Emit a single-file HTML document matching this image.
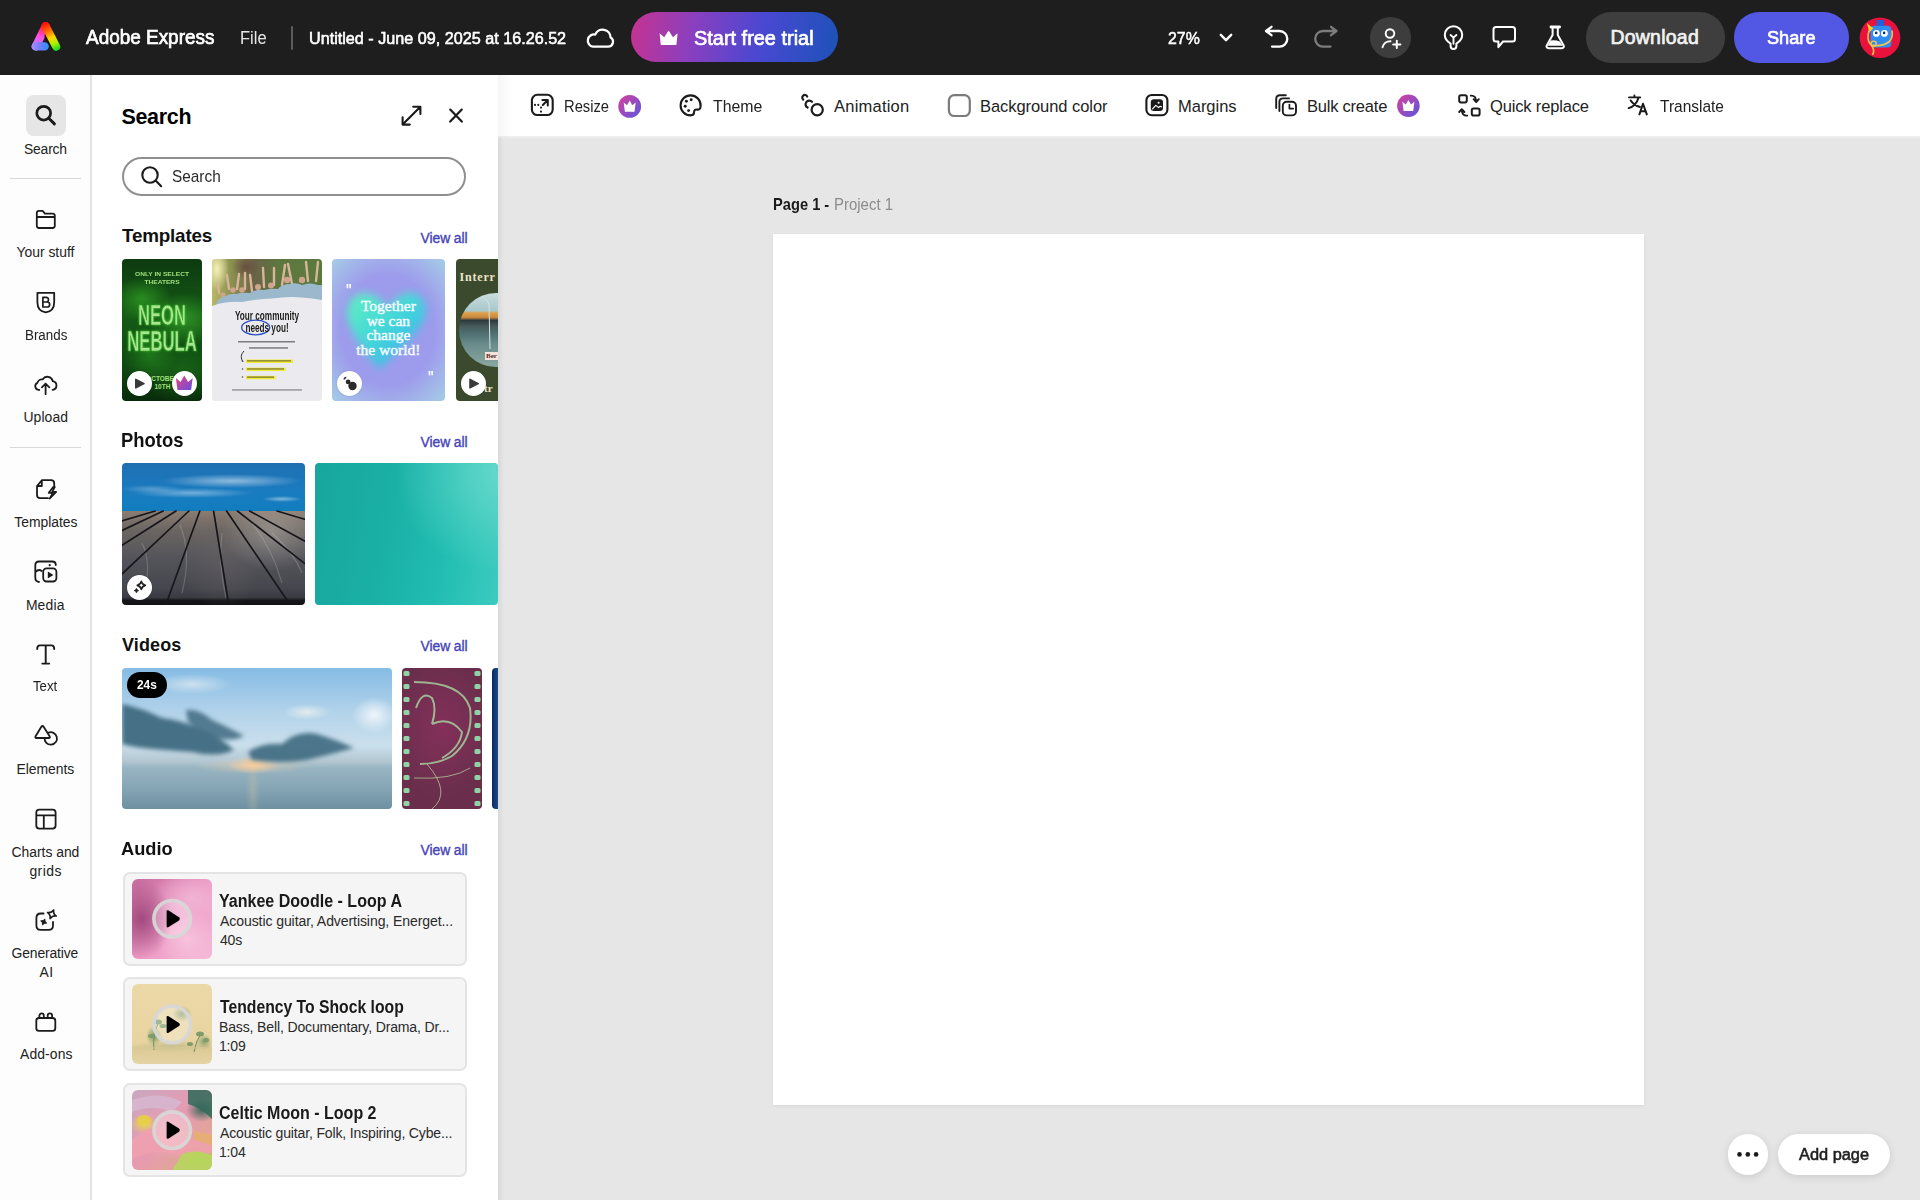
<!DOCTYPE html>
<html><head><meta charset="utf-8"><style>
*{box-sizing:border-box;margin:0;padding:0}
html,body{width:1920px;height:1200px;overflow:hidden;background:#e6e6e6;font-family:"Liberation Sans",sans-serif}
.t{position:absolute;line-height:1;white-space:pre;font-family:"Liberation Sans",sans-serif}
.a{position:absolute}
svg{position:absolute;overflow:visible}
</style></head>
<body>

<div class="a" style="left:0;top:0;width:1920px;height:75px;background:#1e1e1e"></div>
<div class="a" style="left:290.5px;top:25.5px;width:2.5px;height:24px;background:#5c5c5c;border-radius:1px"></div>
<div class="a" style="left:631px;top:12.3px;width:207.3px;height:50px;border-radius:25px;background:linear-gradient(100deg,#c7338f 0%,#8a3fbf 30%,#4a48d2 62%,#1c52b8 100%)"></div>
<div class="a" style="left:1370px;top:17px;width:40.5px;height:40.5px;border-radius:50%;background:#3d3d3d"></div>
<div class="a" style="left:1585.5px;top:12px;width:139px;height:50.5px;border-radius:25px;background:#3e3e3e"></div>
<div class="a" style="left:1734.3px;top:12px;width:114.7px;height:50.5px;border-radius:25px;background:#5258e4"></div>

<!-- left rail -->
<div class="a" style="left:0;top:75px;width:90px;height:1125px;background:#fdfdfd"></div><div class="a" style="left:90px;top:75px;width:2px;height:1125px;background:#e3e3e3"></div>
<div class="a" style="left:26px;top:95px;width:40px;height:41px;border-radius:8px;background:#e6e6e6"></div>
<div class="a" style="left:10px;top:178px;width:71px;height:1px;background:#d8d8d8"></div>
<div class="a" style="left:10px;top:446.5px;width:71px;height:1px;background:#d8d8d8"></div>

<!-- panel -->
<div class="a" style="left:92px;top:75px;width:406px;height:1125px;background:#fff"></div>
<div class="a" style="left:498px;top:138px;width:6px;height:1062px;background:linear-gradient(90deg,rgba(0,0,0,.06),rgba(0,0,0,0))"></div>
<div class="a" style="left:122.4px;top:156.5px;width:343.6px;height:39.5px;border-radius:20px;border:2px solid #8f8f8f;background:#fff"></div>

<!-- toolbar -->
<div class="a" style="left:498px;top:75px;width:1422px;height:63px;background:linear-gradient(180deg,#fff 0,#fff 60.5px,#f1f1f1 61px,#ececec 63px)"></div><div class="a" style="left:498px;top:75px;width:14px;height:63px;background:linear-gradient(90deg,rgba(0,0,0,.035),rgba(0,0,0,0))"></div>

<!-- canvas page -->
<div class="a" style="left:773px;top:234px;width:871px;height:871px;background:#fff;box-shadow:0 1px 3px rgba(0,0,0,.07)"></div>

<!-- add page -->
<div class="a" style="left:1727.5px;top:1134px;width:40.5px;height:40.5px;border-radius:50%;background:#fff;box-shadow:0 2px 8px rgba(0,0,0,.12)"></div>
<div class="a" style="left:1778px;top:1134px;width:111.5px;height:41px;border-radius:21px;background:#fff;box-shadow:0 2px 8px rgba(0,0,0,.12)"></div>

<div class="a" style="left:122.4px;top:259px;width:79.4px;height:141.6px;border-radius:4px;overflow:hidden;"><div class="a" style="inset:0;background:radial-gradient(ellipse 30px 22px at 20px 40px,rgba(60,190,40,.55),transparent),radial-gradient(ellipse 34px 26px at 62px 60px,rgba(70,200,50,.5),transparent),radial-gradient(ellipse 26px 30px at 28px 95px,rgba(50,170,40,.45),transparent),radial-gradient(ellipse 40px 30px at 60px 115px,rgba(40,140,30,.4),transparent),linear-gradient(180deg,#0d3a10 0%,#155a16 40%,#0f4a12 75%,#082a0a 100%)"></div><div class="t" style="left:-60px;width:200px;top:12px;text-align:center;font-size:6px;font-weight:700;color:#9fe07a;line-height:7.5px;transform:scaleX(1.1)">ONLY IN SELECT<br>THEATERS</div><div class="t" style="left:-60.5px;width:200px;top:43px;text-align:center;font-size:30px;font-weight:700;color:#a6e68e;-webkit-text-stroke:.5px #2f8a22;line-height:26px;transform:scaleX(.555);transform-origin:100px 0;text-shadow:0 0 3px #3ae02a">NEON<br>NEBULA</div><div class="t" style="left:-60px;width:200px;top:116px;text-align:center;font-size:6.5px;font-weight:700;color:#9fe07a;line-height:8px">OCTOBER<br>10TH</div></div>
<div class="a" style="left:212.4px;top:259px;width:109.6px;height:141.6px;border-radius:4px;overflow:hidden;box-shadow:inset 0 0 0 1px rgba(0,0,0,.07)"><div class="a" style="inset:0;background:#ebebef"></div><div class="a" style="left:0;top:0;width:110px;height:50px;background:radial-gradient(ellipse 12px 22px at 5px 10px,#f4f0b8,transparent),radial-gradient(ellipse 14px 12px at 34px 8px,#6a5040,transparent),radial-gradient(ellipse 30px 20px at 85px 10px,#5e7a40,transparent),linear-gradient(90deg,#b8b868 0%,#8a9050 18%,#6a6448 38%,#5e7440 60%,#587a3c 100%)"></div><svg width="110" height="142" style="left:0;top:0"><g stroke="#d8b498" stroke-width="2.4" stroke-linecap="round" fill="none"><path d="M7,34 L6,24"/><path d="M17,30 L15,16"/><path d="M25,30 L27,15"/><path d="M33,30 L33,14"/><path d="M40,32 L38,16"/><path d="M52,28 L51,9"/><path d="M62,26 L62,9"/><path d="M70,26 L73,6"/><path d="M80,25 L76,5"/><path d="M96,22 L94,3"/><path d="M104,22 L106,3"/></g><g fill="#cfa48a"><circle cx="11" cy="36" r="2.6"/><circle cx="21" cy="31" r="2.8"/><circle cx="30" cy="31" r="2.8"/><circle cx="46" cy="28" r="3"/><circle cx="59" cy="26.5" r="3"/><circle cx="75" cy="21" r="3.2"/><circle cx="90" cy="21" r="3.2"/></g><path d="M4,46 Q6,38 12,38 Q18,34 24,35 Q30,33 38,34 Q44,30 52,31 Q60,29 66,30 Q70,25 78,25 Q84,23 90,26 Q98,23 106,26 L110,26 V50 H0 Z" fill="#9cb8cc"/><path d="M0,47 Q14,42 30,43 Q46,40 60,39.5 Q76,37 90,38.5 Q100,39 110,41 V60 H0 Z" fill="#ebebef"/><ellipse cx="43.7" cy="68.5" rx="14" ry="7.3" fill="none" stroke="#2d4fc4" stroke-width="1.3"/><g fill="#f2ea3a"><rect x="34" y="100.5" width="47" height="3.5"/><rect x="34" y="108.6" width="39.5" height="3.5"/><rect x="34" y="116.8" width="29.5" height="3.5"/></g><path d="M32,92 Q27,97 31,103" fill="none" stroke="#222" stroke-width=".9"/><g fill="#333" opacity=".6"><rect x="26" y="82" width="57" height="1.5"/><rect x="37" y="88.2" width="39" height="1.5"/><rect x="35" y="101.2" width="44" height="1.3"/><rect x="35" y="109.3" width="37" height="1.3"/><rect x="35" y="117.5" width="27" height="1.3"/><rect x="20" y="130.4" width="70" height="1.1"/></g><g fill="#555"><circle cx="30.5" cy="102" r=".8"/><circle cx="30.5" cy="110" r=".8"/><circle cx="30.5" cy="118" r=".8"/></g></svg><div class="t" style="left:-45px;width:200px;top:51px;text-align:center;font-size:13px;font-weight:700;color:#1d1d1d;line-height:11.5px;transform:scaleX(.63);transform-origin:100px 0">Your community<br>needs you!</div></div>
<div class="a" style="left:332.4px;top:259px;width:113.1px;height:141.6px;border-radius:4px;overflow:hidden;"><div class="a" style="inset:0;background:radial-gradient(ellipse 85px 100px at 56px 71px,#9d9bec 55%,#a6d0e6 100%)"></div><svg width="113" height="142" style="left:0;top:0"><defs><filter id="hb" x="-30%" y="-30%" width="160%" height="160%"><feGaussianBlur stdDeviation="4"/></filter><linearGradient id="hg" x1="0" y1="0" x2="1" y2="1"><stop offset="0" stop-color="#62f0c0"/><stop offset=".45" stop-color="#44d8d8"/><stop offset="1" stop-color="#3aa8f4"/></linearGradient></defs><path d="M56,52 C49,32 22,27 16,47 C11,65 28,86 47,110 C72,86 99,65 93,45 C87,27 63,32 56,52 Z" fill="url(#hg)" filter="url(#hb)"/></svg><div class="t" style="left:-44px;width:200px;top:40px;text-align:center;font-family:'Liberation Serif',serif;font-size:15.5px;font-weight:400;-webkit-text-stroke:.45px #f4fbff;color:#f4fbff;line-height:14.5px">Together<br>we can<br>change<br>the world!</div><div class="t" style="left:13px;top:24px;font-size:16px;font-weight:700;color:#fff;transform:scaleX(.8)">"</div><div class="t" style="left:95px;top:111px;font-size:16px;font-weight:700;color:#fff;transform:scaleX(.8)">"</div></div>
<div class="a" style="left:456.1px;top:259px;width:41.9px;height:141.6px;overflow:hidden;border-radius:4px 0 0 4px"><div class="a" style="inset:0;background:#3b4a2d"></div><div class="a" style="left:3px;top:34px;width:74px;height:74px;border-radius:50%;background:linear-gradient(180deg,#c8dede 0%,#a8c8cc 24%,#e0a048 27%,#c88840 33%,#2c3a3e 37%,#485a5c 45%,#4e7070 55%,#6a8c8c 70%,#8aa8a2 100%)"></div><svg width="42" height="142" style="left:0;top:0"><path d="M34,90 L33,46 Q32,40 26,38" stroke="#d8e2e2" stroke-width="1" fill="none"/></svg><div class="t" style="left:3.5px;top:12px;font-family:'Liberation Serif',serif;font-size:12px;font-weight:700;letter-spacing:.8px;color:#ece2c8">Interr</div><div class="a" style="left:29px;top:93px;width:14px;height:8px;background:#f2e4da"></div><div class="t" style="left:30px;top:94px;font-family:'Liberation Serif',serif;font-size:7px;font-weight:700;color:#5a2a2a">Ber</div><div class="t" style="left:28px;top:124px;font-family:'Liberation Serif',serif;font-size:11px;font-weight:700;color:#ece2c8">tr</div></div>
<div class="a" style="left:122.4px;top:463px;width:182.3px;height:141.8px;border-radius:4px;overflow:hidden;"><div class="a" style="left:0;top:0;width:183px;height:48.5px;background:radial-gradient(ellipse 70px 7px at 110px 18px,rgba(235,242,250,.55),transparent),radial-gradient(ellipse 60px 5px at 70px 30px,rgba(225,238,250,.45),transparent),radial-gradient(ellipse 30px 4px at 30px 26px,rgba(225,238,250,.3),transparent),radial-gradient(ellipse 20px 3px at 160px 36px,rgba(235,242,250,.5),transparent),linear-gradient(180deg,#1f6fb2 0%,#1a7cc0 60%,#0f7dbf 100%)"></div><div class="a" style="left:0;top:48px;width:183px;height:94px;background:radial-gradient(ellipse 50px 40px at 150px 20px,rgba(190,185,180,.45),transparent),radial-gradient(ellipse 40px 50px at 100px 50px,rgba(120,110,110,.3),transparent),linear-gradient(180deg,#8a7c72 0%,#6c6662 20%,#54545a 50%,#46474e 82%,#3a3b42 92%,#161618 95%,#121214 100%)"></div><svg width="183" height="142" style="left:0;top:0"><g stroke="rgba(220,220,225,.22)" stroke-width="1.2" fill="none"><path d="M58,62 Q70,90 60,130"/><path d="M100,70 Q96,100 104,135"/><path d="M130,60 Q150,85 160,120"/><path d="M150,70 Q172,90 180,110"/><path d="M20,80 Q30,100 22,130"/></g><g stroke="#17161a" stroke-width="1.7" fill="none" stroke-linecap="round"><path d="M33.2,48.0 L-0.4,58.0"/><path d="M41.2,48.0 L-0.4,67.7"/><path d="M54.0,48.0 L-0.4,82.5"/><path d="M66.9,48.0 L-0.4,111.3"/><path d="M77.8,48.0 L44.1,141.0"/><path d="M91.6,48.0 L106.6,141.0"/><path d="M104.6,48.0 L164.9,137.0"/><path d="M115.4,48.0 L182.6,100.4"/><path d="M155.0,48.0 L182.6,56.3"/><path d="M127.6,48.0 L182.6,78.0"/></g></svg></div>
<div class="a" style="left:315px;top:463px;width:183px;height:141.8px;border-radius:4px;overflow:hidden;"><div class="a" style="inset:0;background:radial-gradient(ellipse 110px 100px at 190px 10px,rgba(110,220,206,.85),transparent),linear-gradient(100deg,#18a69e 0%,#1ab0a6 40%,#22bdb2 70%,#3ccbbf 100%)"></div></div>
<div class="a" style="left:122px;top:667.6px;width:269.6px;height:141.2px;border-radius:4px;overflow:hidden;"><div class="a" style="inset:0;background:radial-gradient(ellipse 26px 9px at 131px 97px,rgba(255,205,150,.9),transparent),radial-gradient(ellipse 60px 8px at 131px 98px,rgba(240,210,170,.5),transparent),radial-gradient(ellipse 7px 40px at 131px 122px,rgba(210,195,160,.35),transparent),radial-gradient(ellipse 22px 18px at 252px 47px,rgba(245,248,252,.9),transparent),radial-gradient(ellipse 24px 8px at 185px 44px,rgba(245,245,240,.7),transparent),radial-gradient(ellipse 40px 10px at 70px 16px,rgba(240,242,245,.6),transparent),linear-gradient(180deg,#86bce4 0%,#b0d2ea 30%,#cadfec 55%,#b4c8d2 66%,#98b4c2 71%,#86a6b6 85%,#6e90a2 100%)"></div><svg width="270" height="142" style="left:0;top:0"><defs><filter id="cb" x="-20%" y="-50%" width="140%" height="200%"><feGaussianBlur stdDeviation="2.2"/></filter></defs><g filter="url(#cb)" fill="#3f6a80"><path d="M0,36 Q20,40 40,50 Q60,52 80,62 Q100,70 112,82 Q95,90 70,84 Q40,82 20,80 Q6,78 0,76 Z" opacity=".95"/><path d="M64,42 Q76,40 90,52 Q104,58 122,68 Q110,74 96,70 Q80,64 66,54 Z" opacity=".85"/><path d="M126,84 Q140,74 160,76 Q175,62 195,66 Q215,72 232,80 Q210,86 185,92 Q160,96 130,92 Z" opacity=".9"/></g></svg></div>
<div class="a" style="left:402.1px;top:667.6px;width:79.6px;height:141.2px;border-radius:4px;overflow:hidden;"><div class="a" style="inset:0;background:radial-gradient(ellipse 50px 70px at 40px 60px,#84305a,#6a2e4c)"></div><svg width="80" height="141" style="left:0;top:0"><g fill="#8fd3a6"><rect x="1.5" y="3" width="6" height="5" rx="1.5"/><rect x="72.5" y="3" width="6" height="5" rx="1.5"/><rect x="1.5" y="16" width="6" height="5" rx="1.5"/><rect x="72.5" y="16" width="6" height="5" rx="1.5"/><rect x="1.5" y="29" width="6" height="5" rx="1.5"/><rect x="72.5" y="29" width="6" height="5" rx="1.5"/><rect x="1.5" y="42" width="6" height="5" rx="1.5"/><rect x="72.5" y="42" width="6" height="5" rx="1.5"/><rect x="1.5" y="55" width="6" height="5" rx="1.5"/><rect x="72.5" y="55" width="6" height="5" rx="1.5"/><rect x="1.5" y="68" width="6" height="5" rx="1.5"/><rect x="72.5" y="68" width="6" height="5" rx="1.5"/><rect x="1.5" y="81" width="6" height="5" rx="1.5"/><rect x="72.5" y="81" width="6" height="5" rx="1.5"/><rect x="1.5" y="94" width="6" height="5" rx="1.5"/><rect x="72.5" y="94" width="6" height="5" rx="1.5"/><rect x="1.5" y="107" width="6" height="5" rx="1.5"/><rect x="72.5" y="107" width="6" height="5" rx="1.5"/><rect x="1.5" y="120" width="6" height="5" rx="1.5"/><rect x="72.5" y="120" width="6" height="5" rx="1.5"/><rect x="1.5" y="133" width="6" height="5" rx="1.5"/><rect x="72.5" y="133" width="6" height="5" rx="1.5"/></g><path d="M12,14 Q60,14 68,40 Q72,70 50,88 Q36,96 18,96 M30,56 Q35,40 30,30 Q20,22 14,40 M30,56 Q48,48 60,64 Q58,80 40,90" fill="none" stroke="#a8d8a0" stroke-width="2" opacity=".8"/><path d="M12,110 Q50,112 68,100 M25,96 Q50,125 30,141" fill="none" stroke="#b8dca0" stroke-width="1" opacity=".7"/></svg></div>
<div class="a" style="left:492px;top:667.6px;width:6px;height:141.2px;border-radius:4px 0 0 4px;background:linear-gradient(90deg,#0a2a60,#1a4a8a)"></div>
<div class="a" style="left:127px;top:672.3px;width:39.8px;height:25.5px;border-radius:13px;background:#000"></div>
<div class="a" style="left:122.8px;top:871.6px;width:343.9px;height:94.2px;border-radius:7px;background:#f5f5f5;border:2px solid #e4e4e4"></div>
<div class="a" style="left:131.7px;top:878.6px;width:80.7px;height:80.2px;border-radius:6px;overflow:hidden;"><div class="a" style="inset:0;background:radial-gradient(ellipse 30px 40px at 10px 40px,#a24a7e,transparent),radial-gradient(ellipse 40px 30px at 60px 20px,#f2b4d4,transparent),radial-gradient(ellipse 30px 30px at 55px 60px,#f7c2dc,transparent),linear-gradient(135deg,#c86ca0,#ef9fc8 60%,#f4b8d6)"></div></div>
<svg width="1" height="1" style="left:0;top:0"><circle cx="172.2" cy="918.8000000000001" r="18.3" fill="rgba(255,255,255,.28)" stroke="rgba(215,215,215,.95)" stroke-width="3.6"/><path d="M166.6,911.6 Q166.6,909.4000000000001 168.6,910.6 L179,917.2 Q180.8,918.8000000000001 179,920.4000000000001 L168.6,927.0000000000001 Q166.6,928.2 166.6,926.0000000000001 Z" fill="#000"/></svg>
<div class="a" style="left:122.8px;top:977.3000000000001px;width:343.9px;height:94.2px;border-radius:7px;background:#f5f5f5;border:2px solid #e4e4e4"></div>
<div class="a" style="left:131.7px;top:984.3000000000001px;width:80.7px;height:80.2px;border-radius:6px;overflow:hidden;"><div class="a" style="inset:0;background:radial-gradient(ellipse 40px 6px at 40px 62px,#c8c090,transparent),radial-gradient(ellipse 8px 10px at 22px 52px,#7c9a68,transparent),radial-gradient(ellipse 10px 8px at 50px 30px,#8fa878,transparent),radial-gradient(ellipse 8px 8px at 72px 58px,#8da06a,transparent),linear-gradient(180deg,#ecd9a8 0%,#e8d4a0 75%,#dccb96 80%,#e4d4a4 100%)"></div><svg width="81" height="81" style="left:0;top:0"><g stroke="#6f8f62" stroke-width="1" fill="none"><path d="M22,66 Q20,50 28,36"/><path d="M62,68 Q64,56 70,48"/></g><g fill="#7e9c6c"><ellipse cx="26" cy="38" rx="4" ry="2.5"/><ellipse cx="31" cy="42" rx="3.5" ry="2"/><ellipse cx="19" cy="52" rx="3" ry="2"/><ellipse cx="68" cy="50" rx="4" ry="2.5"/><ellipse cx="74" cy="56" rx="3" ry="2"/><ellipse cx="58" cy="60" rx="3" ry="2"/></g><path d="M0,64 H81" stroke="#d8c898" stroke-width="1.2"/></svg></div>
<svg width="1" height="1" style="left:0;top:0"><circle cx="172.2" cy="1024.5" r="18.3" fill="rgba(255,255,255,.28)" stroke="rgba(215,215,215,.95)" stroke-width="3.6"/><path d="M166.6,1017.3 Q166.6,1015.1 168.6,1016.3 L179,1022.9 Q180.8,1024.5 179,1026.1 L168.6,1032.7 Q166.6,1033.9 166.6,1031.7 Z" fill="#000"/></svg>
<div class="a" style="left:122.8px;top:1083.0px;width:343.9px;height:94.2px;border-radius:7px;background:#f5f5f5;border:2px solid #e4e4e4"></div>
<div class="a" style="left:131.7px;top:1090.0px;width:80.7px;height:80.2px;border-radius:6px;overflow:hidden;"><div class="a" style="inset:0;background:radial-gradient(ellipse 14px 10px at 12px 34px,#e8d848,transparent),radial-gradient(ellipse 16px 12px at 70px 20px,#3a6a5a,transparent),radial-gradient(ellipse 20px 16px at 66px 70px,#a8c838,transparent),radial-gradient(ellipse 30px 26px at 36px 44px,#f0a8b8,transparent),linear-gradient(135deg,#c8a8c0,#e89ab0 50%,#d8b080)"></div><svg width="81" height="81" style="left:0;top:0"><g opacity=".85"><path d="M0,50 Q20,30 40,44 Q60,56 81,40 V62 Q60,70 40,64 Q20,58 0,70 Z" fill="#f0a0b0"/><path d="M0,10 Q30,0 50,12 L40,22 Q20,14 0,22 Z" fill="#d8b8d0"/><path d="M56,0 H81 V30 Q70,18 56,14 Z" fill="#2f6a5a"/><path d="M50,64 Q64,58 81,66 V81 H40 Z" fill="#b8d860"/><ellipse cx="12" cy="30" rx="7" ry="5" fill="#e8d040"/><path d="M62,40 Q70,44 81,44 V56 Q72,52 62,50 Z" fill="#e8b070"/></g></svg></div>
<svg width="1" height="1" style="left:0;top:0"><circle cx="172.2" cy="1130.2" r="18.3" fill="rgba(255,255,255,.28)" stroke="rgba(215,215,215,.95)" stroke-width="3.6"/><path d="M166.6,1123.0 Q166.6,1120.8 168.6,1122.0 L179,1128.6000000000001 Q180.8,1130.2 179,1131.8 L168.6,1138.4 Q166.6,1139.6000000000001 166.6,1137.4 Z" fill="#000"/></svg>
<div class="a" style="left:126.9px;top:371.0px;width:25.0px;height:25.0px;border-radius:50%;background:#fff;box-shadow:0 0 2px rgba(0,0,0,.15)"></div>
<div class="a" style="left:171.8px;top:371.0px;width:25.0px;height:25.0px;border-radius:50%;background:#fff;box-shadow:0 0 2px rgba(0,0,0,.15)"></div>
<div class="a" style="left:337.4px;top:370.6px;width:25.0px;height:25.0px;border-radius:50%;background:#fff;box-shadow:0 0 2px rgba(0,0,0,.15)"></div>
<div class="a" style="left:461.1px;top:370.6px;width:25.0px;height:25.0px;border-radius:50%;background:#fff;box-shadow:0 0 2px rgba(0,0,0,.15)"></div>
<div class="a" style="left:127.0px;top:574.6px;width:25.0px;height:25.0px;border-radius:50%;background:#fff;box-shadow:0 0 2px rgba(0,0,0,.15)"></div>
<svg width="1" height="1" style="left:0;top:0"><path d="M135.8,379.40000000000003 L144.0,383.6 L135.8,387.8 Z" fill="#3a3a3a" stroke="#3a3a3a" stroke-width="1.6" stroke-linejoin="round"/><path d="M470.0,379.40000000000003 L478.20000000000005,383.6 L470.0,387.8 Z" fill="#3a3a3a" stroke="#3a3a3a" stroke-width="1.6" stroke-linejoin="round"/><defs><linearGradient id="gcrown" x1="0" y1="0" x2="1" y2="1"><stop offset="0" stop-color="#e8407a"/><stop offset="1" stop-color="#6a50e0"/></linearGradient></defs><path d="M175.9,378.1 L180.5,382.1 L184.3,375.5 L188.10000000000002,382.1 L192.70000000000002,378.1 L191.10000000000002,389.9 H177.5 Z" fill="url(#gcrown)"/><circle cx="352.5" cy="386.0" r="4.2" fill="#2a2a2a"/><circle cx="348.09999999999997" cy="381.90000000000003" r="2.4" fill="#2a2a2a"/><path d="M344.29999999999995,379.5 A1.8,1.8 0 0 1 346.29999999999995,377.5" stroke="#2a2a2a" stroke-width="1.6" fill="none"/><path d="M141.3,581.4 Q142.10000000000002,584.6 145.3,585.4 Q142.10000000000002,586.1999999999999 141.3,589.4 Q140.5,586.1999999999999 137.3,585.4 Q140.5,584.6 141.3,581.4 Z" fill="none" stroke="#222" stroke-width="1.7" stroke-linejoin="round"/><path d="M136.4,588.2 Q136.9,590.1 138.8,590.6 Q136.9,591.1 136.4,593.0 Q135.9,591.1 134.0,590.6 Q135.9,590.1 136.4,588.2 Z" fill="#222" stroke="#222" stroke-width=".6"/></svg>
<svg width="1920" height="1200" style="left:0;top:0"><defs>
    <linearGradient id="lgL" gradientUnits="userSpaceOnUse" x1="34" y1="49" x2="46" y2="23"><stop offset="0" stop-color="#a58cff"/><stop offset=".5" stop-color="#ff4ee0"/><stop offset=".85" stop-color="#ff1a3a"/><stop offset="1" stop-color="#ff1010"/></linearGradient>
    <linearGradient id="lgR" gradientUnits="userSpaceOnUse" x1="46" y1="23" x2="57.5" y2="49"><stop offset="0" stop-color="#ff1010"/><stop offset=".3" stop-color="#ff7000"/><stop offset=".55" stop-color="#ffd800"/><stop offset=".78" stop-color="#b0f000"/><stop offset="1" stop-color="#22dd22"/></linearGradient>
    <linearGradient id="lgB" gradientUnits="userSpaceOnUse" x1="32" y1="48" x2="48" y2="48"><stop offset="0" stop-color="#a88cff"/><stop offset=".45" stop-color="#7a7cff"/><stop offset="1" stop-color="#2a90ff"/></linearGradient>
    <linearGradient id="gbadge" x1="0" y1="0" x2="1" y2="1"><stop offset="0" stop-color="#d9409a"/><stop offset="1" stop-color="#5a55e0"/></linearGradient>
    </defs>
<path d="M35.8,46.4 L45.6,26.2" fill="none" stroke="url(#lgL)" stroke-width="8.2" stroke-linecap="round" stroke-linejoin="round" />
<path d="M35.8,46.4 L44.6,46.4" fill="none" stroke="url(#lgB)" stroke-width="8.4" stroke-linecap="round" stroke-linejoin="round" />
<path d="M49.6,36.2 L56.2,46.6" fill="none" stroke="#161616" stroke-width="10.2" stroke-linecap="round" stroke-linejoin="round" />
<path d="M45.6,26.2 L56.2,46.6" fill="none" stroke="url(#lgR)" stroke-width="8.2" stroke-linecap="round" stroke-linejoin="round" />
<path d="M592.8,46.7 H608 A4.9,4.9 0 0 0 610.6,37.6 A8,8 0 0 0 595.2,34.6 A5.9,5.9 0 0 0 592.8,46.7 Z" fill="none" stroke="#fff" stroke-width="2.3" stroke-linecap="round" stroke-linejoin="round" />
<path d="M659.6,33.2 L664.2,37.2 L668.6,30.4 L673.0,37.2 L677.6,33.2 L676.4,45.0 H660.8 Z" fill="#fff" />
<path d="M1220.8,34.8 L1226,40.2 L1231.2,34.8" fill="none" stroke="#fff" stroke-width="2.4" stroke-linecap="round" stroke-linejoin="round" />
<path d="M1266,31 L1271.5,26.8 M1266,31 L1271.5,35.2 M1266,31 H1279.5 A7.8,7.8 0 0 1 1279.5,46.6 H1272" fill="none" stroke="#fff" stroke-width="2.3" stroke-linecap="round" stroke-linejoin="round" />
<path d="M1336.5,31 L1331,26.8 M1336.5,31 L1331,35.2 M1336.5,31 H1323 A7.8,7.8 0 0 0 1323,46.6 H1330.5" fill="none" stroke="#7c7c7c" stroke-width="2.3" stroke-linecap="round" stroke-linejoin="round" />
<path d="M1390,33.5 m-4.3,0 a4.3,4.3 0 1 0 8.6,0 a4.3,4.3 0 1 0 -8.6,0" fill="none" stroke="#fff" stroke-width="1.9" stroke-linecap="round" stroke-linejoin="round" />
<path d="M1382.5,47.3 A8,8 0 0 1 1390.5,41.2" fill="none" stroke="#fff" stroke-width="1.9" stroke-linecap="round" stroke-linejoin="round" />
<path d="M1396.8,40.7 V48 M1393.2,44.4 H1400.4" fill="none" stroke="#fff" stroke-width="2.0" stroke-linecap="round" stroke-linejoin="round" />
<path d="M1450.6,43.6 Q1444.8,40.2 1444.8,34.8 A8.7,8.7 0 0 1 1462.2,34.8 Q1462.2,40.2 1456.4,43.6 V46 A2.9,2.9 0 0 1 1450.6,46 Z" fill="none" stroke="#fff" stroke-width="2.0" stroke-linecap="round" stroke-linejoin="round" />
<path d="M1453.5,43.8 V37.6 M1450.6,35 L1453.5,37.6 L1456.4,35" fill="none" stroke="#fff" stroke-width="1.9" stroke-linecap="round" stroke-linejoin="round" />
<path d="M1496,27 H1512.5 A2.5,2.5 0 0 1 1515,29.5 V39 A2.5,2.5 0 0 1 1512.5,41.5 H1503 L1498.4,47.2 V41.5 H1496 A2.5,2.5 0 0 1 1493.5,39 V29.5 A2.5,2.5 0 0 1 1496,27 Z" fill="none" stroke="#fff" stroke-width="2.0" stroke-linecap="round" stroke-linejoin="round" />
<path d="M1551,27 H1559.6" fill="none" stroke="#fff" stroke-width="2.8" stroke-linecap="round" stroke-linejoin="round" />
<path d="M1552.6,27.8 V35 L1546.8,45.4 A1.9,1.9 0 0 0 1548.4,48.3 H1562 A1.9,1.9 0 0 0 1563.6,45.4 L1557.8,35 V27.8" fill="none" stroke="#fff" stroke-width="2.0" stroke-linecap="round" stroke-linejoin="round" />
<path d="M1547.8,45.8 L1550.6,40.6 Q1555,39.4 1559.8,41.6 L1562.6,45.8 Z" fill="#fff" />
<circle cx="1880" cy="37.7" r="20.3" fill="#e8123c"/>
<rect x="1870.4" y="25.8" width="21" height="21.6" rx="4" fill="#2f8ef0"/>
<path d="M1876.8,20 H1884.2 V26 H1876.8 Z" fill="#1f5fe0" />
<path d="M1866.8,22.9 L1873.4,28.6 L1869.4,32 Z" fill="#f7d21e" />
<path d="M1869.4,30 Q1866.4,38 1869.6,43 Q1873.2,47 1873.6,50 Q1873.8,53.6 1872.6,54.4 M1872.6,45.2 Q1882,47 1889.4,41.5 Q1893.2,37 1892,31" fill="none" stroke="#f8c64a" stroke-width="1.6" stroke-linecap="round" stroke-linejoin="round" />
<circle cx="1876.4" cy="33.4" r="3.4" fill="#fff"/><circle cx="1884.4" cy="33.4" r="3.4" fill="#fff"/><circle cx="1876.2" cy="32.9" r="1.3" fill="#0a2ba0"/><circle cx="1884.1" cy="32.9" r="1.3" fill="#0a2ba0"/>
<circle cx="1873.6" cy="43.8" r="2.6" fill="none" stroke="#f8c64a" stroke-width="1.3"/>
<path d="M43.7,113.2 m-6.9,0 a6.9,6.9 0 1 0 13.8,0 a6.9,6.9 0 1 0 -13.8,0" fill="none" stroke="#1b1b1b" stroke-width="2.7" stroke-linecap="round" stroke-linejoin="round" />
<path d="M48.8,118.3 L54.4,123.9" fill="none" stroke="#1b1b1b" stroke-width="2.9" stroke-linecap="round" stroke-linejoin="round" />
<path d="M36.8,225.8 V213 Q36.8,210.8 39,210.8 H42.6 L45,213.6 H52.6 Q54.8,213.6 54.8,215.8 V225.8 Q54.8,228 52.6,228 H39 Q36.8,228 36.8,225.8 Z M36.8,217 H54.8" fill="none" stroke="#1b1b1b" stroke-width="1.8" stroke-linecap="round" stroke-linejoin="round" />
<path d="M37.4,292.8 H54.2 V302.3 Q54.2,311.2 45.8,312.4 Q37.4,311.2 37.4,302.3 Z" fill="none" stroke="#1b1b1b" stroke-width="1.8" stroke-linecap="round" stroke-linejoin="round" />
<path d="M42.9,307 V297.3 H46.6 A2.4,2.4 0 0 1 46.6,302 H42.9 M46.6,302 H47.2 A2.5,2.5 0 0 1 47.2,307 H42.9" fill="none" stroke="#1b1b1b" stroke-width="1.7" stroke-linecap="round" stroke-linejoin="round" />
<path d="M39.3,389.9 H38.3 A3.7,3.7 0 0 1 37.4,382.9 A4.6,4.6 0 0 1 42.6,379.4 A5.6,5.6 0 0 1 52.8,381.2 A4.4,4.4 0 0 1 52.6,389.9" fill="none" stroke="#1b1b1b" stroke-width="1.8" stroke-linecap="round" stroke-linejoin="round" />
<path d="M45.6,394.2 V383.6 M41.9,387.3 L45.6,383.6 L49.3,387.3" fill="none" stroke="#1b1b1b" stroke-width="1.8" stroke-linecap="round" stroke-linejoin="round" />
<path d="M37,490 V486 L42,480.2 H51 Q54.2,480.2 54.2,483.4 V486.5 M37,486 H41.8 V480.4 M37,490 V495 Q37,498.2 40.2,498.2 H48" fill="none" stroke="#1b1b1b" stroke-width="1.8" stroke-linecap="round" stroke-linejoin="round" />
<path d="M53.2,487 L48.7,492.8 H52.8 L49.6,498.6 L56.2,491.8 H52.2 L54.8,487" fill="none" stroke="#1b1b1b" stroke-width="1.7" stroke-linecap="round" stroke-linejoin="round" />
<path d="M39,582 Q35.3,581.5 35.3,577.8 V565.3 Q35.3,561.5 39,561.5 H52.2 Q55.8,561.5 55.8,565 M35.6,572 Q38.5,568.5 41.8,571" fill="none" stroke="#1b1b1b" stroke-width="1.8" stroke-linecap="round" stroke-linejoin="round" />
<rect x="43.2" y="568.3" width="13.2" height="13.2" rx="3.4" fill="none" stroke="#1b1b1b" stroke-width="1.8"/>
<circle cx="49.7" cy="565.2" r="1.1" fill="#1b1b1b"/>
<path d="M47.8,571.4 L47.8,578.4 L53.4,574.9 Z" fill="#1b1b1b" />
<path d="M37.2,649 Q37.2,645.4 39.8,645.4 H51.6 Q54.2,645.4 54.2,649 M45.7,645.6 V663.6 M42.3,663.6 H49.2" fill="none" stroke="#1b1b1b" stroke-width="1.9" stroke-linecap="round" stroke-linejoin="round" />
<path d="M44.6,737.8 A6.2,6.2 0 1 0 48.2,732.8" fill="none" stroke="#1b1b1b" stroke-width="1.8" stroke-linecap="round" stroke-linejoin="round" />
<path d="M41.2,727 Q42.5,725 43.8,727 L49.6,736.2 Q50.6,738 48.6,738 H36.6 Q34.6,738 35.6,736.2 Z" fill="none" stroke="#1b1b1b" stroke-width="1.8" stroke-linecap="round" stroke-linejoin="round" />
<path d="M39.3,809.6 H52.6 Q55.6,809.6 55.6,812.6 V825.6 Q55.6,828.6 52.6,828.6 H39.3 Q36.3,828.6 36.3,825.6 V812.6 Q36.3,809.6 39.3,809.6 Z M36.3,815.3 H55.6 M43.8,815.3 V828.6" fill="none" stroke="#1b1b1b" stroke-width="1.8" stroke-linecap="round" stroke-linejoin="round" />
<path d="M43.6,913.5 H40.8 Q36.4,913.5 36.4,917.9 V925.4 Q36.4,929.8 40.8,929.8 H48.6 Q53,929.8 53,925.4 V922" fill="none" stroke="#1b1b1b" stroke-width="1.8" stroke-linecap="round" stroke-linejoin="round" />
<path d="M0,-4.6 Q.9,-.9 4.6,0 Q.9,.9 0,4.6 Q-.9,.9 -4.6,0 Q-.9,-.9 0,-4.6 Z" transform="translate(51.9,914.3) rotate(22)" fill="none" stroke="#1b1b1b" stroke-width="1.7" stroke-linejoin="round"/>
<path d="M0,-3.2 Q.6,-.6 3.2,0 Q.6,.6 0,3.2 Q-.6,.6 -3.2,0 Q-.6,-.6 0,-3.2 Z" transform="translate(43.7,922) rotate(22)" fill="#1b1b1b" stroke="#1b1b1b" stroke-width=".8" stroke-linejoin="round"/>
<path d="M39,1018 H52.6 Q55.3,1018 55.3,1020.7 V1028.2 Q55.3,1030.9 52.6,1030.9 H39 Q36.3,1030.9 36.3,1028.2 V1020.7 Q36.3,1018 39,1018 Z" fill="none" stroke="#1b1b1b" stroke-width="1.8" stroke-linecap="round" stroke-linejoin="round" />
<path d="M39.4,1018 V1015.6 A2.2,2.2 0 0 1 43.8,1015.6 V1018 M47.7,1018 V1015.6 A2.2,2.2 0 0 1 52.1,1015.6 V1018" fill="none" stroke="#1b1b1b" stroke-width="1.8" stroke-linecap="round" stroke-linejoin="round" />
<path d="M413.2,106.8 H420.4 V114 M420.4,106.8 L402.6,124.6 M402.6,117.4 V124.6 H409.8" fill="none" stroke="#1b1b1b" stroke-width="2.1" stroke-linecap="round" stroke-linejoin="round" />
<path d="M450.2,109.6 L461.8,121.6 M461.8,109.6 L450.2,121.6" fill="none" stroke="#1b1b1b" stroke-width="2.2" stroke-linecap="round" stroke-linejoin="round" />
<path d="M150,175 m-7.7,0 a7.7,7.7 0 1 0 15.4,0 a7.7,7.7 0 1 0 -15.4,0 M155.6,180.6 L161.2,186.2" fill="none" stroke="#1b1b1b" stroke-width="2.1" stroke-linecap="round" stroke-linejoin="round" />
<rect x="531.9" y="94.8" width="20.8" height="20.2" rx="5.5" fill="none" stroke="#1b1b1b" stroke-width="2.1"/>
<path d="M542.4,100 H547.8 V105.4 M547.6,100.2 L542.8,105" fill="none" stroke="#1b1b1b" stroke-width="2.0" stroke-linecap="round" stroke-linejoin="round" />
<circle cx="535" cy="104.9" r="1.05" fill="#1b1b1b"/>
<circle cx="538.3" cy="104.9" r="1.05" fill="#1b1b1b"/>
<circle cx="541" cy="107.6" r="1.05" fill="#1b1b1b"/>
<circle cx="541" cy="111.6" r="1.05" fill="#1b1b1b"/>
<circle cx="629.7" cy="106.4" r="11.4" fill="url(#gbadge)"/>
<path d="M623.7,102.4 L627.1,105.2 L629.7,100.60000000000001 L632.3000000000001,105.2 L635.7,102.4 L634.5,111.7 H624.9000000000001 Z" fill="#fff"/>
<circle cx="1408.4" cy="105.7" r="11.3" fill="url(#gbadge)"/>
<path d="M1402.4,101.7 L1405.8000000000002,104.5 L1408.4,99.9 L1411.0,104.5 L1414.4,101.7 L1413.2,111.0 H1403.6000000000001 Z" fill="#fff"/>
<path d="M690.6,95.4 A10,10 0 0 0 690.6,115.4 Q694,115.4 694,112.6 Q694,109 697.4,109.6 Q700.6,110 700.6,106 A10,10 0 0 0 690.6,95.4 Z" fill="none" stroke="#1b1b1b" stroke-width="2.1" stroke-linecap="round" stroke-linejoin="round" />
<circle cx="686.4" cy="101.2" r="1.45" fill="#1b1b1b"/>
<circle cx="691.2" cy="99.8" r="1.45" fill="#1b1b1b"/>
<circle cx="685.2" cy="106.2" r="1.45" fill="#1b1b1b"/>
<circle cx="688.6" cy="110.6" r="1.45" fill="#1b1b1b"/>
<circle cx="817.2" cy="109.7" r="5.6" fill="none" stroke="#1b1b1b" stroke-width="2.2"/>
<path d="M807.2,96.5 A2.6,2.6 0 1 0 803.2,99.6" fill="none" stroke="#1b1b1b" stroke-width="2.2" stroke-linecap="round" stroke-linejoin="round" />
<path d="M812,101.8 A3.7,3.7 0 1 0 807.6,107.6" fill="none" stroke="#1b1b1b" stroke-width="2.2" stroke-linecap="round" stroke-linejoin="round" />
<rect x="948.9" y="95.2" width="20.9" height="20.8" rx="5.4" fill="none" stroke="#7a7a7a" stroke-width="2.2"/>
<rect x="1146.4" y="95" width="21" height="20.2" rx="5.4" fill="none" stroke="#1b1b1b" stroke-width="2.1"/>
<rect x="1150.8" y="99.3" width="12.2" height="11.8" rx="3" fill="#1b1b1b"/>
<path d="M1152.6,108.8 L1155.8,105.4 L1158.6,107.6 Q1160,105.8 1161.4,106.8" fill="none" stroke="#fff" stroke-width="1.2" stroke-linecap="round" stroke-linejoin="round" />
<circle cx="1158.6" cy="102.8" r="1" fill="#fff"/>
<path d="M1276.2,108 V99 Q1276.2,95.2 1280,95.2 H1285.8" fill="none" stroke="#1b1b1b" stroke-width="1.9" stroke-linecap="round" stroke-linejoin="round" />
<path d="M1279.4,111 V102 Q1279.4,98.4 1283,98.4 H1289" fill="none" stroke="#1b1b1b" stroke-width="1.9" stroke-linecap="round" stroke-linejoin="round" />
<rect x="1282.8" y="101.8" width="13.2" height="13.6" rx="4" fill="none" stroke="#1b1b1b" stroke-width="1.9"/>
<path d="M1289.4,104.6 V108.6 H1293.2" fill="none" stroke="#1b1b1b" stroke-width="1.7" stroke-linecap="round" stroke-linejoin="round" />
<rect x="1459.2" y="95.2" width="7.6" height="7.2" rx="1.8" fill="none" stroke="#1b1b1b" stroke-width="2"/>
<rect x="1471.8" y="108.4" width="7.8" height="7.2" rx="1.8" fill="none" stroke="#1b1b1b" stroke-width="2"/>
<path d="M1470.8,95.6 Q1476,95.2 1476.2,101.4 M1473.6,99.2 L1476.2,102 L1478.8,99.2" fill="none" stroke="#1b1b1b" stroke-width="1.9" stroke-linecap="round" stroke-linejoin="round" />
<path d="M1467.2,115.6 Q1462,116 1461.8,109.8 M1459.2,112 L1461.8,109.2 L1464.4,112" fill="none" stroke="#1b1b1b" stroke-width="1.9" stroke-linecap="round" stroke-linejoin="round" />
<path d="M1629,97.4 H1640.2 M1634.4,95.4 V97.4 M1638.6,97.6 Q1636,106 1628.6,108.2 M1630.6,100.4 Q1634,105.5 1640,107" fill="none" stroke="#1b1b1b" stroke-width="1.9" stroke-linecap="round" stroke-linejoin="round" />
<path d="M1639.4,114.4 L1643,103.8 L1646.8,114.4 M1640.6,111.2 H1645.4" fill="none" stroke="#1b1b1b" stroke-width="2.0" stroke-linecap="round" stroke-linejoin="round" />
<circle cx="1739.5" cy="1154.4" r="2.3" fill="#1b1b1b"/>
<circle cx="1747.8" cy="1154.4" r="2.3" fill="#1b1b1b"/>
<circle cx="1756.1" cy="1154.4" r="2.3" fill="#1b1b1b"/></svg>
<div class='t' style='left:86.25px;top:27.00px;font-size:20.0px;font-weight:400;letter-spacing:0.000px;color:#ffffff;-webkit-text-stroke:0.7px #ffffff;transform:scaleX(0.9467);transform-origin:0 0;'>Adobe Express</div>
<div class='t' style='left:240.09px;top:29.00px;font-size:18.12px;font-weight:400;letter-spacing:0.000px;color:#e6e6e6;transform:scaleX(0.9111);transform-origin:0 0;'>File</div>
<div class='t' style='left:308.76px;top:30.00px;font-size:17.25px;font-weight:400;letter-spacing:0.000px;color:#ffffff;-webkit-text-stroke:0.6px #ffffff;transform:scaleX(0.9374);transform-origin:0 0;'>Untitled - June 09, 2025 at 16.26.52</div>
<div class='t' style='left:694.04px;top:28.00px;font-size:20.72px;font-weight:400;letter-spacing:0.000px;color:#ffffff;-webkit-text-stroke:0.7px #ffffff;transform:scaleX(0.9618);transform-origin:0 0;'>Start free trial</div>
<div class='t' style='left:1168.20px;top:30.00px;font-size:17.1px;font-weight:400;letter-spacing:0.000px;color:#ffffff;-webkit-text-stroke:0.5px #ffffff;transform:scaleX(0.9294);transform-origin:0 0;'>27%</div>
<div class='t' style='left:1610.40px;top:28.00px;font-size:19.42px;font-weight:400;letter-spacing:0.286px;color:#f2f2f2;-webkit-text-stroke:0.7px #f2f2f2;'>Download</div>
<div class='t' style='left:1766.85px;top:28.00px;font-size:19.06px;font-weight:400;letter-spacing:0.000px;color:#ffffff;-webkit-text-stroke:0.7px #ffffff;transform:scaleX(0.9540);transform-origin:0 0;'>Share</div>
<div class='t' style='left:564.11px;top:99.00px;font-size:16.52px;font-weight:400;letter-spacing:0.000px;color:#222222;transform:scaleX(0.8929);transform-origin:0 0;'>Resize</div>
<div class='t' style='left:713.00px;top:99.00px;font-size:16.52px;font-weight:400;letter-spacing:0.000px;color:#222222;transform:scaleX(0.9608);transform-origin:0 0;'>Theme</div>
<div class='t' style='left:834.00px;top:99.00px;font-size:16.52px;font-weight:400;letter-spacing:0.213px;color:#222222;'>Animation</div>
<div class='t' style='left:980.00px;top:99.00px;font-size:16.52px;font-weight:400;letter-spacing:-0.067px;color:#222222;'>Background color</div>
<div class='t' style='left:1178.00px;top:99.00px;font-size:16.52px;font-weight:400;letter-spacing:-0.033px;color:#222222;'>Margins</div>
<div class='t' style='left:1307.00px;top:99.00px;font-size:16.52px;font-weight:400;letter-spacing:-0.230px;color:#222222;'>Bulk create</div>
<div class='t' style='left:1490.00px;top:99.00px;font-size:16.52px;font-weight:400;letter-spacing:-0.167px;color:#222222;'>Quick replace</div>
<div class='t' style='left:1660.00px;top:99.00px;font-size:16.52px;font-weight:400;letter-spacing:0.000px;color:#222222;transform:scaleX(0.9375);transform-origin:0 0;'>Translate</div>
<div class='t' style='left:1799.00px;top:1146.00px;font-size:17.39px;font-weight:400;letter-spacing:0.000px;color:#1f1f1f;-webkit-text-stroke:0.6px #1f1f1f;transform:scaleX(0.9419);transform-origin:0 0;'>Add page</div>
<div class='t' style='left:121.40px;top:107.00px;font-size:21.45px;font-weight:700;letter-spacing:-0.280px;color:#000;'>Search</div>
<div class='t' style='left:172.09px;top:169.00px;font-size:16.96px;font-weight:400;letter-spacing:0.000px;color:#2a2a2a;transform:scaleX(0.9077);transform-origin:0 0;'>Search</div>
<div class='t' style='left:122.00px;top:227.00px;font-size:18.84px;font-weight:700;letter-spacing:-0.188px;color:#111;'>Templates</div>
<div class='t' style='left:121.05px;top:431.00px;font-size:19.42px;font-weight:700;letter-spacing:0.000px;color:#111;transform:scaleX(0.9484);transform-origin:0 0;'>Photos</div>
<div class='t' style='left:122.00px;top:637.00px;font-size:17.97px;font-weight:700;letter-spacing:0.140px;color:#111;'>Videos</div>
<div class='t' style='left:121.05px;top:839.00px;font-size:19.28px;font-weight:700;letter-spacing:0.000px;color:#111;transform:scaleX(0.9472);transform-origin:0 0;'>Audio</div>
<div class='t' style='left:137.30px;top:678.00px;font-size:13.48px;font-weight:700;letter-spacing:0.000px;color:#ffffff;transform:scaleX(0.8818);transform-origin:0 0;'>24s</div>
<div class='t' style='left:420.60px;top:232.00px;font-size:13.91px;font-weight:400;letter-spacing:-0.100px;color:#4444b8;-webkit-text-stroke:0.35px #4444b8;'>View all</div>
<div class='t' style='left:420.60px;top:436.00px;font-size:13.91px;font-weight:400;letter-spacing:-0.100px;color:#4444b8;-webkit-text-stroke:0.35px #4444b8;'>View all</div>
<div class='t' style='left:420.60px;top:640.00px;font-size:13.91px;font-weight:400;letter-spacing:-0.100px;color:#4444b8;-webkit-text-stroke:0.35px #4444b8;'>View all</div>
<div class='t' style='left:420.60px;top:844.00px;font-size:13.91px;font-weight:400;letter-spacing:-0.100px;color:#4444b8;-webkit-text-stroke:0.35px #4444b8;'>View all</div>
<div class='t' style='left:218.83px;top:892.00px;font-size:18.41px;font-weight:700;letter-spacing:0.000px;color:#1a1a1a;transform:scaleX(0.8713);transform-origin:0 0;'>Yankee Doodle - Loop A</div>
<div class='t' style='left:220.00px;top:914.00px;font-size:14.06px;font-weight:400;letter-spacing:-0.090px;color:#2a2a2a;'>Acoustic guitar, Advertising, Energet...</div>
<div class='t' style='left:220.00px;top:933.00px;font-size:14.06px;font-weight:400;letter-spacing:-0.200px;color:#2a2a2a;'>40s</div>
<div class='t' style='left:219.70px;top:998.00px;font-size:18.41px;font-weight:700;letter-spacing:0.000px;color:#1a1a1a;transform:scaleX(0.8542);transform-origin:0 0;'>Tendency To Shock loop</div>
<div class='t' style='left:219.00px;top:1020.00px;font-size:14.06px;font-weight:400;letter-spacing:-0.156px;color:#2a2a2a;'>Bass, Bell, Documentary, Drama, Dr...</div>
<div class='t' style='left:219.00px;top:1039.00px;font-size:14.06px;font-weight:400;letter-spacing:-0.200px;color:#2a2a2a;'>1:09</div>
<div class='t' style='left:218.83px;top:1104.00px;font-size:18.41px;font-weight:700;letter-spacing:0.000px;color:#1a1a1a;transform:scaleX(0.8704);transform-origin:0 0;'>Celtic Moon - Loop 2</div>
<div class='t' style='left:220.00px;top:1126.00px;font-size:14.06px;font-weight:400;letter-spacing:-0.163px;color:#2a2a2a;'>Acoustic guitar, Folk, Inspiring, Cybe...</div>
<div class='t' style='left:219.00px;top:1145.00px;font-size:14.06px;font-weight:400;letter-spacing:-0.200px;color:#2a2a2a;'>1:04</div>
<div class='t' style='left:24.00px;top:143.00px;font-size:13.91px;font-weight:400;letter-spacing:-0.200px;color:#222;'>Search</div>
<div class='t' style='left:16.50px;top:246.00px;font-size:13.91px;font-weight:400;letter-spacing:-0.011px;color:#222;'>Your stuff</div>
<div class='t' style='left:24.64px;top:329.00px;font-size:13.91px;font-weight:400;letter-spacing:0.000px;color:#222;transform:scaleX(0.9605);transform-origin:0 0;'>Brands</div>
<div class='t' style='left:23.40px;top:411.00px;font-size:13.91px;font-weight:400;letter-spacing:0.120px;color:#222;'>Upload</div>
<div class='t' style='left:14.30px;top:516.00px;font-size:13.91px;font-weight:400;letter-spacing:-0.037px;color:#222;'>Templates</div>
<div class='t' style='left:25.90px;top:599.00px;font-size:13.91px;font-weight:400;letter-spacing:0.150px;color:#222;'>Media</div>
<div class='t' style='left:33.30px;top:680.00px;font-size:13.91px;font-weight:400;letter-spacing:0.000px;color:#222;transform:scaleX(0.9500);transform-origin:0 0;'>Text</div>
<div class='t' style='left:16.50px;top:763.00px;font-size:13.91px;font-weight:400;letter-spacing:-0.043px;color:#222;'>Elements</div>
<div class='t' style='left:11.50px;top:846.00px;font-size:13.91px;font-weight:400;letter-spacing:-0.022px;color:#222;'>Charts and</div>
<div class='t' style='left:29.40px;top:865.00px;font-size:13.91px;font-weight:400;letter-spacing:0.463px;color:#222;'>grids</div>
<div class='t' style='left:11.50px;top:947.00px;font-size:13.91px;font-weight:400;letter-spacing:-0.133px;color:#222;'>Generative</div>
<div class='t' style='left:39.60px;top:966.00px;font-size:13.91px;font-weight:400;letter-spacing:0.400px;color:#222;'>AI</div>
<div class='t' style='left:20.00px;top:1048.00px;font-size:13.91px;font-weight:400;letter-spacing:0.117px;color:#222;'>Add-ons</div>
<div class='t' style='left:773.20px;top:196.00px;font-size:16.38px;font-weight:700;letter-spacing:0.000px;color:#1a1a1a;transform:scaleX(0.8967);transform-origin:0 0;'>Page 1 -</div>
<div class='t' style='left:833.79px;top:196.00px;font-size:16.38px;font-weight:400;letter-spacing:0.000px;color:#8c8c8c;transform:scaleX(0.9143);transform-origin:0 0;'>Project 1</div>
</body></html>
